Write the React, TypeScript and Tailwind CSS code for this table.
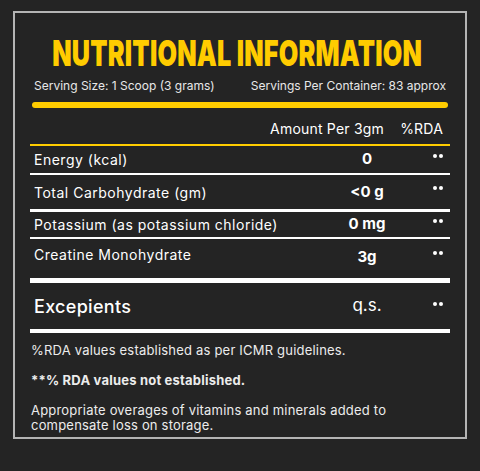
const rows = [
  { label: "Energy (kcal)", value: "0", h: "h-[27px]", line: "h-[2px]" },
  { label: "Total Carbohydrate (gm)", value: "<0 g", h: "h-[34px]", line: "h-[3px]" },
  { label: "Potassium (as potassium chloride)", value: "0 mg", h: "h-[25px]", line: "h-[2px]" },
];

function Stars({ className = "" }: { className?: string }) {
  return (
    <span className={"flex w-[40px] justify-end gap-[2px] pr-[7px] " + className}>
      <span className="h-[4px] w-[4px] rounded-full bg-white" />
      <span className="h-[4px] w-[4px] rounded-full bg-white" />
    </span>
  );
}

export default function App() {
  return (
    <div className="min-h-[471px] bg-[#242424] pt-[11px] font-['Inter',sans-serif] text-white">
      <div className="mx-[13px] h-[428px] border-2 border-[#b4b4b4] px-[15px]">
        <div className="flex h-[57px] items-end justify-center pr-[6px]">
          <h1 className="origin-center scale-x-[0.7] text-[36px] leading-[34px] font-black tracking-[0.3px] whitespace-nowrap text-[#ffcc00]">
            NUTRITIONAL INFORMATION
          </h1>
        </div>

        <div className="mt-[8px] flex justify-between px-[4px] text-[12px] leading-[16px] text-[#e8e8e8]">
          <span>Serving Size: 1 Scoop (3 grams)</span>
          <span>Servings Per Container: 83 approx</span>
        </div>

        <div className="mx-[2px] mt-[8px] h-[6px] rounded-full bg-[#ffcc00]" />

        <div className="flex h-[36px] items-end pb-[7px] text-[14px] leading-[16px] tracking-[0.2px]">
          <span className="flex-1" />
          <span className="w-[130px] pr-[9px] text-right">Amount Per 3gm</span>
          <span className="w-[57px] pr-[7px] text-right">%RDA</span>
        </div>
        <div className="h-[2px] bg-[#ffcc00]" />

        {rows.map((r) => (
          <div key={r.label}>
            <div className={"flex items-center text-[14px] tracking-[0.5px] " + r.h}>
              <span className="flex-1 pl-[4px]">{r.label}</span>
              <span className="w-[80px] text-center text-[15px] font-bold tracking-normal">{r.value}</span>
              <Stars className="-mt-[8px] ml-[3px]" />
            </div>
            <div className={"bg-white " + r.line} />
          </div>
        ))}

        <div className="flex h-[39px] items-start text-[14px] tracking-[0.5px]">
          <span className="flex-1 pt-[5px] pl-[4px]">Creatine Monohydrate</span>
          <span className="w-[80px] pt-[9px] text-center text-[15px] leading-[18px] font-bold tracking-normal">3g</span>
          <Stars className="ml-[3px] pt-[12px]" />
        </div>
        <div className="h-[5px] bg-white" />

        <div className="flex h-[46px] items-center">
          <span className="flex-1 pl-[4px] text-[18px] font-medium tracking-[0.3px]">Excepients</span>
          <span className="w-[80px] text-center text-[17px]">q.s.</span>
          <Stars className="-mt-[4px] ml-[3px]" />
        </div>
        <div className="h-[4px] bg-white" />

        <div className="pt-[10px] pl-[1px] text-[13px] leading-[15px] tracking-[0.2px] text-[#ececec]">
          <p>%RDA values established as per ICMR guidelines.</p>
          <p className="mt-[15px] font-bold">**% RDA values not established.</p>
          <p className="mt-[15px]">
            Appropriate overages of vitamins and minerals added to
            <br />
            compensate loss on storage.
          </p>
        </div>
      </div>
    </div>
  );
}
